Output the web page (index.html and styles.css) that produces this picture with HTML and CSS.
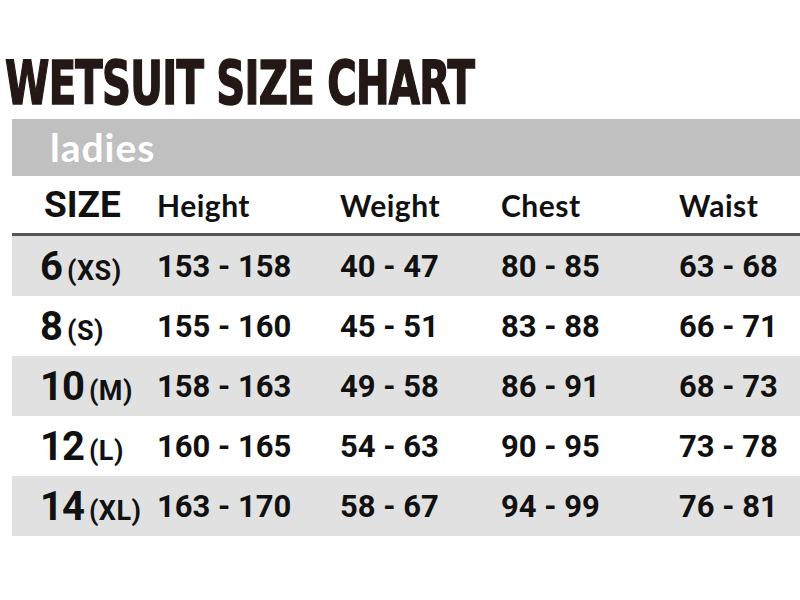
FILE: index.html
```html
<!DOCTYPE html>
<html>
<head>
<meta charset="utf-8">
<link rel="stylesheet" href="styles.css">
</head>
<body>
<h1 class="title">WETSUIT SIZE CHART</h1>
<div class="chart">
  <div class="band">ladies</div>
  <div class="row head">
    <div class="size">SIZE</div>
    <div class="label">Height</div>
    <div class="label">Weight</div>
    <div class="label">Chest</div>
    <div class="label">Waist</div>
  </div>
  <div class="row alt">
    <div class="size">6<span class="sz">(XS)</span></div>
    <div class="num">153 - 158</div><div class="num">40 - 47</div><div class="num">80 - 85</div><div class="num">63 - 68</div>
  </div>
  <div class="row">
    <div class="size">8<span class="sz">(S)</span></div>
    <div class="num">155 - 160</div><div class="num">45 - 51</div><div class="num">83 - 88</div><div class="num">66 - 71</div>
  </div>
  <div class="row alt">
    <div class="size">10<span class="sz">(M)</span></div>
    <div class="num">158 - 163</div><div class="num">49 - 58</div><div class="num">86 - 91</div><div class="num">68 - 73</div>
  </div>
  <div class="row">
    <div class="size">12<span class="sz">(L)</span></div>
    <div class="num">160 - 165</div><div class="num">54 - 63</div><div class="num">90 - 95</div><div class="num">73 - 78</div>
  </div>
  <div class="row alt">
    <div class="size">14<span class="sz">(XL)</span></div>
    <div class="num">163 - 170</div><div class="num">58 - 67</div><div class="num">94 - 99</div><div class="num">76 - 81</div>
  </div>
</div>
</body>
</html>
```
FILE: styles.css
```css
html, body {
  margin: 0;
  padding: 0;
  background: #fff;
}
body {
  width: 800px;
  height: 600px;
  overflow: hidden;
  font-family: Roboto, "Liberation Sans", sans-serif;
  color: #111;
}
.title {
  margin: 0;
  padding: 53px 0 0 5px;
  height: 119px;
  box-sizing: border-box;
  font-family: "DejaVu Sans Condensed", "DejaVu Sans", sans-serif;
  font-weight: 900;
  font-size: 60px;
  line-height: 60px;
  color: #231815;
  transform-origin: 5px 0;
  transform: scaleX(0.745);
  white-space: nowrap;
  letter-spacing: -1px;
  -webkit-text-stroke: 1.5px #231815;
}
.chart {
  margin-left: 12px;
}
.band {
  height: 57px;
  background: #c0c0c0;
  color: #fff;
  font-family: Lato, "Open Sans", sans-serif;
  font-weight: bold;
  font-size: 39px;
  line-height: 57px;
  letter-spacing: 1px;
  padding-left: 38px;
  box-sizing: border-box;
}
.row {
  display: grid;
  grid-template-columns: 117px 183px 161px 178px 1fr;
  padding-left: 28px;
  height: 60px;
  align-items: center;
}
.row.alt {
  background: #e1e1e1;
}
.head {
  height: 57px;
  border-bottom: 3px solid #555;
}
.size {
  font-family: Roboto, sans-serif;
  font-weight: bold;
  font-size: 40px;
  letter-spacing: -1px;
}
.head .size {
  font-size: 37px;
  letter-spacing: 0;
  padding-left: 4px;
}
.sz {
  font-size: 27px;
  margin-left: 5px;
  letter-spacing: 0.5px;
}
.label {
  font-family: Lato, "Open Sans", sans-serif;
  font-weight: bold;
  font-size: 30px;
  letter-spacing: 0.5px;
}
.num {
  font-family: Roboto, sans-serif;
  font-weight: bold;
  font-size: 31px;
}
```
